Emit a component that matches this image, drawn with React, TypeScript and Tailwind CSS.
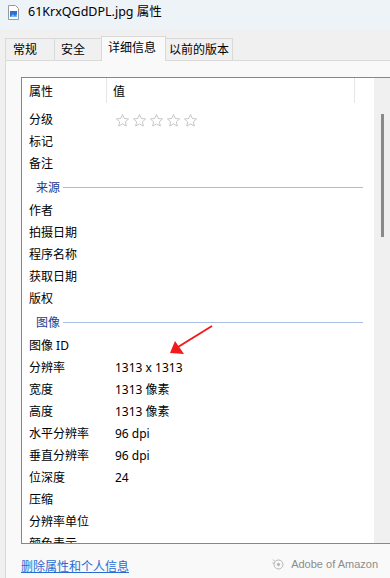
import React from 'react';

type Row = { name: string; value?: string; stars?: boolean } | { group: string };

const rows: Row[] = [
  { name: '分级', stars: true },
  { name: '标记' },
  { name: '备注' },
  { group: '来源' },
  { name: '作者' },
  { name: '拍摄日期' },
  { name: '程序名称' },
  { name: '获取日期' },
  { name: '版权' },
  { group: '图像' },
  { name: '图像 ID' },
  { name: '分辨率', value: '1313 x 1313' },
  { name: '宽度', value: '1313 像素' },
  { name: '高度', value: '1313 像素' },
  { name: '水平分辨率', value: '96 dpi' },
  { name: '垂直分辨率', value: '96 dpi' },
  { name: '位深度', value: '24' },
  { name: '压缩' },
  { name: '分辨率单位' },
  { name: '颜色表示' },
];

const Star = () => (
  <svg width="15" height="15" viewBox="0 0 24 24" fill="none" stroke="#c6c6c6" strokeWidth="1.6" strokeLinejoin="round">
    <path d="M12 2.5l2.9 6.3 6.8.7-5.1 4.6 1.5 6.8L12 17.4l-6.1 3.5 1.5-6.8-5.1-4.6 6.8-.7z" />
  </svg>
);

const FileIcon = () => (
  <svg width="11" height="15" viewBox="0 0 11 15">
    <path d="M0.5 0.5h7l3 3v11h-10z" fill="#ffffff" stroke="#9a9a9a" />
    <rect x="2" y="6" width="7" height="6" fill="#2f6fd0" />
    <path d="M2 12l3-3 2 2 2-2v3z" fill="#6fb6ff" />
  </svg>
);

export default function App() {
  return (
    <div
      className="relative w-[390px] h-[578px] overflow-hidden bg-[#f0f0f0] text-[12px] text-black"
      style={{ fontFamily: '"Noto Sans", "Noto Sans CJK SC", sans-serif' }}
    >
      {/* Title bar */}
      <div className="h-[29px] bg-[#eef3f8] flex items-center pl-[8px] gap-[9px] pb-[4px]">
        <FileIcon />
        <span className="text-[12.5px]">61KrxQGdDPL.jpg 属性</span>
      </div>

      {/* Tabs */}
      <div className="h-[31px] flex items-end pl-[5px]">
        <div className="w-[50px] h-[22px] pl-[7px] pt-[1px] flex items-center border border-b-0 border-[#d9d9d9]">常规</div>
        <div className="w-[48px] h-[22px] pl-[6px] pt-[1px] -ml-px flex items-center border border-b-0 border-[#d9d9d9]">安全</div>
        <div className="relative z-10 w-[65px] h-[25px] pl-[6px] pb-[2px] -ml-px -mb-px flex items-center border border-b-0 border-[#d9d9d9] bg-[#f9f9f9]">
          详细信息
        </div>
        <div className="w-[68px] h-[22px] pl-[3px] pt-[1px] -ml-px flex items-center border border-b-0 border-[#d9d9d9]">以前的版本</div>
      </div>

      {/* Panel */}
      <div className="ml-[5px] h-[518px] border-l border-t border-[#d9d9d9] bg-[#f9f9f9] pt-[16px] pl-[15px] flex flex-col">
        <div className="w-[380px] h-[467px] border-l border-t border-b border-[#828790] bg-white flex">
          <div className="w-[352px] overflow-hidden">
            <div className="h-[26px] flex">
              <div className="w-[85px] pl-[7px] pt-[2px] flex items-center border-r border-[#e5e5e5] h-[25px]">属性</div>
              <div className="w-[248px] pl-[6px] pt-[2px] flex items-center border-r border-[#e5e5e5] h-[25px]">值</div>
            </div>
            <div className="pt-[5px]">
              {rows.map((r, i) =>
                'group' in r ? (
                  <div key={i} className="h-[25px] flex items-center pl-[14px] pr-[11px]">
                    <span className="text-[#1e3c8e]">{r.group}</span>
                    <div className="flex-1 ml-[3px] h-px bg-[#a9bee2]" />
                  </div>
                ) : (
                  <div key={i} className="h-[22px] flex items-center">
                    <div className="w-[86px] pl-[7px] whitespace-nowrap">{r.name}</div>
                    <div className="pl-[7px] whitespace-nowrap">
                      {r.stars ? (
                        <div className="flex gap-[2px]">
                          <Star />
                          <Star />
                          <Star />
                          <Star />
                          <Star />
                        </div>
                      ) : (
                        r.value
                      )}
                    </div>
                  </div>
                )
              )}
            </div>
          </div>
          <div className="w-[16px] bg-[#f0f0f0] pt-[36px] pl-[7px]">
            <div className="w-[2.5px] h-[123px] bg-[#8a8a8a]" />
          </div>
        </div>

        <div className="flex items-center justify-between pr-[12px] pt-[14px]">
          <span className="text-[#2a6ad3] underline">删除属性和个人信息</span>
          <div
            className="flex items-center gap-[6px] text-[#8c8c8c] text-[11px] -mt-[6px]"
            style={{ fontFamily: '"Liberation Sans", sans-serif' }}
          >
            <svg width="14" height="14" viewBox="0 0 14 14" fill="none" stroke="#b5b5b5" strokeWidth="1">
              <circle cx="7.5" cy="7.5" r="4.5" />
              <path d="M2 2.5l2 2M1.5 6h2" />
              <circle cx="7.5" cy="7.5" r="1.2" fill="#b5b5b5" />
            </svg>
            <span>Adobe of Amazon</span>
          </div>
        </div>
      </div>

      {/* Red annotation arrow */}
      <svg className="absolute left-0 top-0 pointer-events-none" width="390" height="578">
        <line x1="212" y1="326" x2="178" y2="347" stroke="#f21b1b" strokeWidth="2" />
        <polygon points="170,353 175,341 184,354" fill="#f21b1b" />
      </svg>
    </div>
  );
}
